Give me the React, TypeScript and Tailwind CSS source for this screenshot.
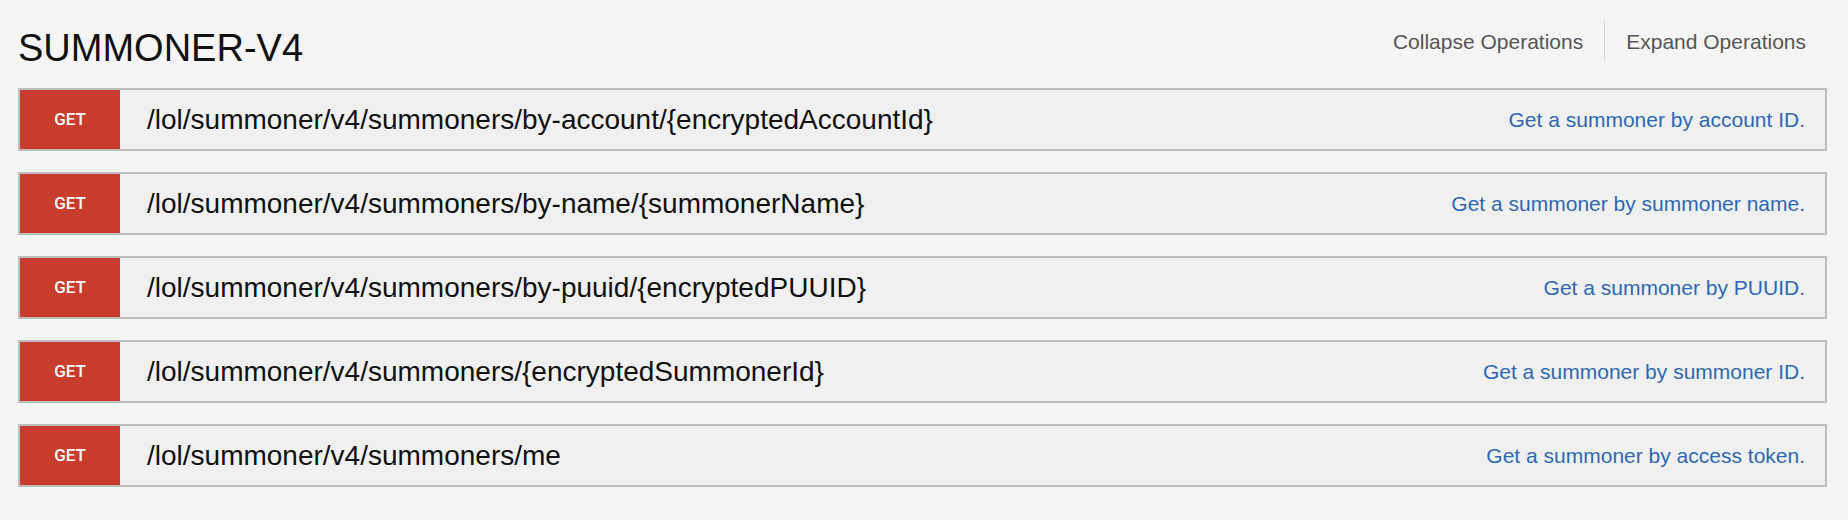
import React from "react";

interface Operation {
  path: string;
  summary: string;
}

const operations: Operation[] = [
  {
    path: "/lol/summoner/v4/summoners/by-account/{encryptedAccountId}",
    summary: "Get a summoner by account ID.",
  },
  {
    path: "/lol/summoner/v4/summoners/by-name/{summonerName}",
    summary: "Get a summoner by summoner name.",
  },
  {
    path: "/lol/summoner/v4/summoners/by-puuid/{encryptedPUUID}",
    summary: "Get a summoner by PUUID.",
  },
  {
    path: "/lol/summoner/v4/summoners/{encryptedSummonerId}",
    summary: "Get a summoner by summoner ID.",
  },
  {
    path: "/lol/summoner/v4/summoners/me",
    summary: "Get a summoner by access token.",
  },
];

const OperationRow: React.FC<{ op: Operation }> = ({ op }) => (
  <div className="flex h-[63px] items-stretch border-2 border-[#bdbdbd] bg-[#f0f0f0]">
    <div className="flex w-[100px] shrink-0 items-center justify-center bg-[#c83d2e] font-['Roboto',sans-serif] text-[17px] font-medium text-white">
      GET
    </div>
    <div className="flex flex-1 items-center pl-[27px] text-[28px] text-[#111]">
      {op.path}
    </div>
    <div className="flex items-center pr-[20px] text-[21px] text-[#2d68b3]">
      {op.summary}
    </div>
  </div>
);

export default function App() {
  return (
    <div className="min-h-[520px] bg-[#f5f5f5] pt-[20px] pl-[18px] pr-[21px] font-['Liberation_Sans',Arial,sans-serif]">
      <div className="flex h-[42px] items-start justify-between">
        <h2 className="mt-[9px] text-[38px] leading-[38px] text-[#111]">
          SUMMONER-V4
        </h2>
        <div className="flex h-[42px] items-center text-[21px] text-[#555]">
          <span className="flex h-full items-center px-[21px] pt-[1px]">
            Collapse Operations
          </span>
          <span className="flex h-full items-center border-l border-[#dcdcdc] px-[21px] pt-[1px]">
            Expand Operations
          </span>
        </div>
      </div>
      <div className="mt-[26px] flex flex-col gap-[21px]">
        {operations.map((op) => (
          <OperationRow key={op.path} op={op} />
        ))}
      </div>
    </div>
  );
}
